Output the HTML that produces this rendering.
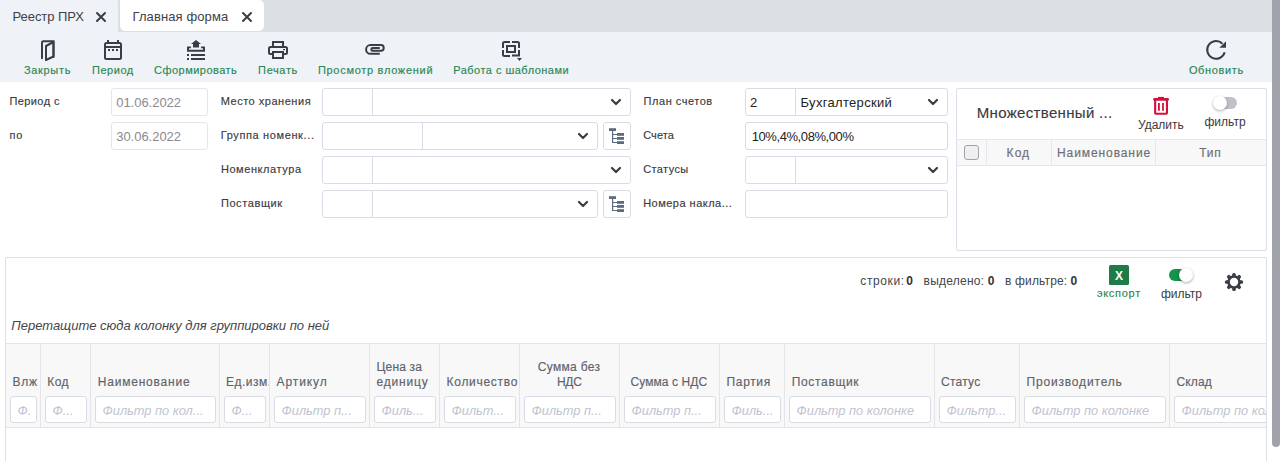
<!DOCTYPE html>
<html><head><meta charset="utf-8">
<style>
*{box-sizing:border-box;margin:0;padding:0}
html,body{width:1280px;height:461px;overflow:hidden;background:#fff;font-family:"Liberation Sans",sans-serif;position:relative}
.a{position:absolute}
.t{position:absolute;white-space:nowrap;line-height:1}
.box{position:absolute;border:1px solid #d9dbe5;border-radius:3px;background:#fff}
.dv{position:absolute;width:1px;background:#d9dbe5}
.clip{position:absolute;overflow:hidden;top:344px;height:83px}
</style></head><body>
<div class="a" style="left:0;top:0;width:1272px;height:32px;background:#dcdfe4"></div>
<div class="a" style="left:0;top:0;width:118px;height:32px;background:#eff2f7;border-top-right-radius:2px"></div>
<div class="a" style="left:120px;top:0;width:144px;height:31px;background:#fff;border-radius:0 5px 5px 5px"></div>
<div class="a" style="left:0;top:32px;width:1272px;height:50px;background:#eff2f7"></div>
<div class="a" style="left:1272px;top:0;width:8px;height:447px;background:#a0a3ab;border-radius:0 0 4px 4px"></div>
<div class="box" style="left:111px;top:88px;width:97px;height:28px;border-color:#e3e4ec"></div>
<div class="box" style="left:111px;top:122px;width:97px;height:28px;border-color:#e3e4ec"></div>
<div class="box" style="left:322px;top:88px;width:309px;height:28px"></div>
<div class="dv" style="left:372px;top:89px;height:26px"></div>
<div class="box" style="left:322px;top:122px;width:276px;height:28px"></div>
<div class="dv" style="left:422px;top:123px;height:26px"></div>
<div class="box" style="left:603px;top:122px;width:28px;height:28px"></div>
<div class="box" style="left:322px;top:156px;width:309px;height:28px"></div>
<div class="dv" style="left:372px;top:157px;height:26px"></div>
<div class="box" style="left:322px;top:190px;width:276px;height:28px"></div>
<div class="dv" style="left:372px;top:191px;height:26px"></div>
<div class="box" style="left:603px;top:190px;width:28px;height:28px"></div>
<div class="box" style="left:745px;top:88px;width:203px;height:28px"></div>
<div class="dv" style="left:795px;top:89px;height:26px"></div>
<div class="box" style="left:745px;top:122px;width:203px;height:28px"></div>
<div class="box" style="left:745px;top:156px;width:203px;height:28px"></div>
<div class="dv" style="left:795px;top:157px;height:26px"></div>
<div class="box" style="left:745px;top:190px;width:203px;height:28px"></div>
<div class="box" style="left:956px;top:88px;width:311px;height:163px;border-color:#dcdee8;border-radius:2px"></div>
<div class="a" style="left:957px;top:139px;width:309px;height:27px;background:#f8f8f9;border-top:1px solid #e6e7ec;border-bottom:1px solid #e6e7ec"></div>
<div class="dv" style="left:986px;top:140px;height:25px;background:#e6e7ec"></div>
<div class="dv" style="left:1051px;top:140px;height:25px;background:#e6e7ec"></div>
<div class="dv" style="left:1155px;top:140px;height:25px;background:#e6e7ec"></div>
<div class="a" style="left:964px;top:145px;width:15px;height:15px;border:1px solid #a2a4ab;border-radius:3px;background:#efeff1"></div>
<div class="a" style="left:1218px;top:97px;width:19px;height:11.5px;border-radius:6px;background:#bfc2c9"></div>
<div class="a" style="left:1213px;top:96px;width:14px;height:14px;border-radius:50%;background:#fff;box-shadow:0 1px 3px rgba(0,0,0,0.35)"></div>
<div class="box" style="left:5px;top:257px;width:1262px;height:220px;border-color:#dcdee8;border-radius:2px"></div>
<div class="a" style="left:1169px;top:269px;width:20px;height:11.5px;border-radius:6px;background:#16924a"></div>
<div class="a" style="left:1179px;top:268px;width:14px;height:14px;border-radius:50%;background:#fff;box-shadow:0 1px 3px rgba(0,0,0,0.35)"></div>
<div class="a" style="left:6px;top:343px;width:1260px;height:85px;background:#f8f8f9;border-top:1px solid #e3e4ea;border-bottom:1px solid #e3e4ea"></div>
<div class="dv" style="left:40px;top:344px;height:83px;background:#e3e4ea"></div>
<div class="dv" style="left:90px;top:344px;height:83px;background:#e3e4ea"></div>
<div class="dv" style="left:219px;top:344px;height:83px;background:#e3e4ea"></div>
<div class="dv" style="left:269px;top:344px;height:83px;background:#e3e4ea"></div>
<div class="dv" style="left:369px;top:344px;height:83px;background:#e3e4ea"></div>
<div class="dv" style="left:439px;top:344px;height:83px;background:#e3e4ea"></div>
<div class="dv" style="left:519px;top:344px;height:83px;background:#e3e4ea"></div>
<div class="dv" style="left:619px;top:344px;height:83px;background:#e3e4ea"></div>
<div class="dv" style="left:719px;top:344px;height:83px;background:#e3e4ea"></div>
<div class="dv" style="left:784px;top:344px;height:83px;background:#e3e4ea"></div>
<div class="dv" style="left:934px;top:344px;height:83px;background:#e3e4ea"></div>
<div class="dv" style="left:1019px;top:344px;height:83px;background:#e3e4ea"></div>
<div class="dv" style="left:1169px;top:344px;height:83px;background:#e3e4ea"></div>
<div class="t" style="left:12.5px;top:10px;font-size:13px;font-weight:400;color:#3f3f46;;letter-spacing:-0.056px;">Реестр ПРХ</div>
<div class="t" style="left:132.5px;top:10px;font-size:13px;font-weight:400;color:#3f3f46;;letter-spacing:0.104px;">Главная форма</div>
<div class="t" style="left:24px;top:65px;font-size:11px;font-weight:400;color:#2b8752;-webkit-text-stroke:0.15px #2b8752;;letter-spacing:0.667px;">Закрыть</div>
<div class="t" style="left:92px;top:65px;font-size:11px;font-weight:400;color:#2b8752;-webkit-text-stroke:0.15px #2b8752;;letter-spacing:0.54px;">Период</div>
<div class="t" style="left:154px;top:65px;font-size:11px;font-weight:400;color:#2b8752;-webkit-text-stroke:0.15px #2b8752;;letter-spacing:0.477px;">Сформировать</div>
<div class="t" style="left:258.1px;top:65px;font-size:11px;font-weight:400;color:#2b8752;-webkit-text-stroke:0.15px #2b8752;;letter-spacing:0.63px;">Печать</div>
<div class="t" style="left:317.9px;top:65px;font-size:11px;font-weight:400;color:#2b8752;-webkit-text-stroke:0.15px #2b8752;;letter-spacing:0.713px;">Просмотр вложений</div>
<div class="t" style="left:453.2px;top:65px;font-size:11px;font-weight:400;color:#2b8752;-webkit-text-stroke:0.15px #2b8752;;letter-spacing:0.482px;">Работа с шаблонами</div>
<div class="t" style="left:1188.9px;top:65px;font-size:11px;font-weight:400;color:#2b8752;-webkit-text-stroke:0.15px #2b8752;;letter-spacing:0.643px;">Обновить</div>
<div class="t" style="left:9.45px;top:96px;font-size:11px;font-weight:400;color:#3a3a40;-webkit-text-stroke:0.15px #3a3a40;;letter-spacing:0.407px;">Период с</div>
<div class="t" style="left:9.45px;top:130px;font-size:11px;font-weight:400;color:#3a3a40;-webkit-text-stroke:0.15px #3a3a40;;letter-spacing:0.85px;">по</div>
<div class="t" style="left:220.7px;top:96px;font-size:11px;font-weight:400;color:#3a3a40;-webkit-text-stroke:0.15px #3a3a40;;letter-spacing:0.523px;">Место хранения</div>
<div class="t" style="left:220.7px;top:130px;font-size:11px;font-weight:400;color:#3a3a40;-webkit-text-stroke:0.15px #3a3a40;;letter-spacing:0.627px;">Группа номенк...</div>
<div class="t" style="left:220.9px;top:164px;font-size:11px;font-weight:400;color:#3a3a40;-webkit-text-stroke:0.15px #3a3a40;;letter-spacing:0.573px;">Номенклатура</div>
<div class="t" style="left:220.9px;top:198px;font-size:11px;font-weight:400;color:#3a3a40;-webkit-text-stroke:0.15px #3a3a40;;letter-spacing:0.6px;">Поставщик</div>
<div class="t" style="left:643.6px;top:96px;font-size:11px;font-weight:400;color:#3a3a40;-webkit-text-stroke:0.15px #3a3a40;;letter-spacing:0.53px;">План счетов</div>
<div class="t" style="left:643.2px;top:130px;font-size:11px;font-weight:400;color:#3a3a40;-webkit-text-stroke:0.15px #3a3a40;;letter-spacing:0.1px;">Счета</div>
<div class="t" style="left:643.2px;top:164px;font-size:11px;font-weight:400;color:#3a3a40;-webkit-text-stroke:0.15px #3a3a40;;letter-spacing:0.4px;">Статусы</div>
<div class="t" style="left:643.2px;top:198px;font-size:11px;font-weight:400;color:#3a3a40;-webkit-text-stroke:0.15px #3a3a40;;letter-spacing:0.479px;">Номера накла...</div>
<div class="t" style="left:116.2px;top:96px;font-size:13px;font-weight:400;color:#8a8a8f;;letter-spacing:-0.022px;">01.06.2022</div>
<div class="t" style="left:116.2px;top:130px;font-size:13px;font-weight:400;color:#8a8a8f;;letter-spacing:-0.022px;">30.06.2022</div>
<div class="t" style="left:750px;top:96px;font-size:13px;font-weight:400;color:#222;;">2</div>
<div class="t" style="left:800.5px;top:96px;font-size:13px;font-weight:400;color:#222;;letter-spacing:0.317px;">Бухгалтерский</div>
<div class="t" style="left:751.7px;top:130px;font-size:13px;font-weight:400;color:#222;;letter-spacing:-0.415px;">10%,4%,08%,00%</div>
<div class="t" style="left:976.8px;top:105px;font-size:15px;font-weight:400;color:#3a3a40;-webkit-text-stroke:0.15px #3a3a40;;letter-spacing:0.325px;">Множественный ...</div>
<div class="t" style="left:1138px;top:119px;font-size:12px;font-weight:400;color:#3a3a40;;">Удалить</div>
<div class="t" style="left:1204.5px;top:116px;font-size:12px;font-weight:400;color:#3a3a40;;">фильтр</div>
<div class="t" style="left:1006.6px;top:147px;font-size:12px;font-weight:400;color:#6c6e75;-webkit-text-stroke:0.15px #6c6e75;;letter-spacing:1.05px;">Код</div>
<div class="t" style="left:1057px;top:147px;font-size:12px;font-weight:400;color:#6c6e75;-webkit-text-stroke:0.15px #6c6e75;;letter-spacing:0.909px;">Наименование</div>
<div class="t" style="left:1199.2px;top:147px;font-size:12px;font-weight:400;color:#6c6e75;-webkit-text-stroke:0.15px #6c6e75;;letter-spacing:0.75px;">Тип</div>
<div class="t" style="left:860.3px;top:275px;font-size:12px;font-weight:400;color:#44454b;;letter-spacing:0.6px;">строки:</div>
<div class="t" style="left:906.25px;top:275px;font-size:12px;font-weight:400;color:#333;font-weight:700;">0</div>
<div class="t" style="left:923.6px;top:275px;font-size:12px;font-weight:400;color:#44454b;;letter-spacing:0.225px;">выделено:</div>
<div class="t" style="left:987.8px;top:275px;font-size:12px;font-weight:400;color:#333;font-weight:700;">0</div>
<div class="t" style="left:1005px;top:275px;font-size:12px;font-weight:400;color:#44454b;;letter-spacing:0.156px;">в фильтре:</div>
<div class="t" style="left:1070.6px;top:275px;font-size:12px;font-weight:400;color:#333;font-weight:700;">0</div>
<div class="t" style="left:1096.9px;top:288px;font-size:11px;font-weight:400;color:#2b8752;-webkit-text-stroke:0.15px #2b8752;;letter-spacing:0.717px;">экспорт</div>
<div class="t" style="left:1161px;top:288px;font-size:12px;font-weight:400;color:#3a3a40;;letter-spacing:-0.04px;">фильтр</div>
<div class="t" style="left:11.3px;top:319.2px;font-size:13px;font-weight:400;color:#44454b;font-style:italic;letter-spacing:-0.009px;">Перетащите сюда колонку для группировки по ней</div>
<div class="clip" style="left:6px;width:34px">
<div class="box" style="left:4px;top:52px;width:27px;height:27px"></div>
<div class="t" style="left:6.4px;top:32px;font-size:12px;font-weight:400;color:#606269;-webkit-text-stroke:0.15px #606269;;letter-spacing:0.75px;">Влж</div>
<div class="t" style="left:11.6px;top:61px;font-size:12.8px;font-weight:400;color:#bfc3cf;font-style:italic;">Ф.</div>
</div>
<div class="clip" style="left:41px;width:49px">
<div class="box" style="left:4px;top:52px;width:42px;height:27px"></div>
<div class="t" style="left:6.3px;top:32px;font-size:12px;font-weight:400;color:#606269;-webkit-text-stroke:0.15px #606269;;letter-spacing:0.35px;">Код</div>
<div class="t" style="left:11.6px;top:61px;font-size:12.8px;font-weight:400;color:#bfc3cf;font-style:italic;">Ф...</div>
</div>
<div class="clip" style="left:91px;width:128px">
<div class="box" style="left:4px;top:52px;width:121px;height:27px"></div>
<div class="t" style="left:6.7px;top:32px;font-size:12px;font-weight:400;color:#606269;-webkit-text-stroke:0.15px #606269;;letter-spacing:0.8px;">Наименование</div>
<div class="t" style="left:11.6px;top:61px;font-size:12.8px;font-weight:400;color:#bfc3cf;font-style:italic;">Фильтр по кол...</div>
</div>
<div class="clip" style="left:220px;width:49px">
<div class="box" style="left:4px;top:52px;width:42px;height:27px"></div>
<div class="t" style="left:6px;top:32px;font-size:12px;font-weight:400;color:#606269;-webkit-text-stroke:0.15px #606269;;letter-spacing:0.5px;">Ед.изм.</div>
<div class="t" style="left:11.6px;top:61px;font-size:12.8px;font-weight:400;color:#bfc3cf;font-style:italic;">Ф...</div>
</div>
<div class="clip" style="left:270px;width:99px">
<div class="box" style="left:4px;top:52px;width:92px;height:27px"></div>
<div class="t" style="left:6.6px;top:32px;font-size:12px;font-weight:400;color:#606269;-webkit-text-stroke:0.15px #606269;;letter-spacing:0.9px;">Артикул</div>
<div class="t" style="left:11.6px;top:61px;font-size:12.8px;font-weight:400;color:#bfc3cf;font-style:italic;">Фильтр п...</div>
</div>
<div class="clip" style="left:370px;width:69px">
<div class="box" style="left:4px;top:52px;width:62px;height:27px"></div>
<div class="t" style="left:6.6px;top:17px;font-size:12px;font-weight:400;color:#606269;-webkit-text-stroke:0.15px #606269;;letter-spacing:0.15px;">Цена за</div>
<div class="t" style="left:6.6px;top:32px;font-size:12px;font-weight:400;color:#606269;-webkit-text-stroke:0.15px #606269;;letter-spacing:0.8px;">единицу</div>
<div class="t" style="left:11.6px;top:61px;font-size:12.8px;font-weight:400;color:#bfc3cf;font-style:italic;">Филь...</div>
</div>
<div class="clip" style="left:440px;width:79px">
<div class="box" style="left:4px;top:52px;width:72px;height:27px"></div>
<div class="t" style="left:6.6px;top:32px;font-size:12px;font-weight:400;color:#606269;-webkit-text-stroke:0.15px #606269;;letter-spacing:0.7px;">Количество</div>
<div class="t" style="left:11.6px;top:61px;font-size:12.8px;font-weight:400;color:#bfc3cf;font-style:italic;">Фильт...</div>
</div>
<div class="clip" style="left:520px;width:99px">
<div class="box" style="left:4px;top:52px;width:92px;height:27px"></div>
<div class="t" style="left:17.8px;top:17px;font-size:12px;font-weight:400;color:#606269;-webkit-text-stroke:0.15px #606269;;letter-spacing:0.312px;">Сумма без</div>
<div class="t" style="left:37px;top:32px;font-size:12px;font-weight:400;color:#606269;-webkit-text-stroke:0.15px #606269;;letter-spacing:-0.3px;">НДС</div>
<div class="t" style="left:11.6px;top:61px;font-size:12.8px;font-weight:400;color:#bfc3cf;font-style:italic;">Фильтр п...</div>
</div>
<div class="clip" style="left:620px;width:99px">
<div class="box" style="left:4px;top:52px;width:92px;height:27px"></div>
<div class="t" style="left:10.5px;top:32px;font-size:12px;font-weight:400;color:#606269;-webkit-text-stroke:0.15px #606269;;letter-spacing:0.08px;">Сумма с НДС</div>
<div class="t" style="left:11.6px;top:61px;font-size:12.8px;font-weight:400;color:#bfc3cf;font-style:italic;">Фильтр п...</div>
</div>
<div class="clip" style="left:720px;width:64px">
<div class="box" style="left:4px;top:52px;width:57px;height:27px"></div>
<div class="t" style="left:6.6px;top:32px;font-size:12px;font-weight:400;color:#606269;-webkit-text-stroke:0.15px #606269;;letter-spacing:0.64px;">Партия</div>
<div class="t" style="left:11.6px;top:61px;font-size:12.8px;font-weight:400;color:#bfc3cf;font-style:italic;">Филь...</div>
</div>
<div class="clip" style="left:785px;width:149px">
<div class="box" style="left:4px;top:52px;width:142px;height:27px"></div>
<div class="t" style="left:6.7px;top:32px;font-size:12px;font-weight:400;color:#606269;-webkit-text-stroke:0.15px #606269;;letter-spacing:0.675px;">Поставщик</div>
<div class="t" style="left:11.6px;top:61px;font-size:12.8px;font-weight:400;color:#bfc3cf;font-style:italic;">Фильтр по колонке</div>
</div>
<div class="clip" style="left:935px;width:84px">
<div class="box" style="left:4px;top:52px;width:77px;height:27px"></div>
<div class="t" style="left:6.1px;top:32px;font-size:12px;font-weight:400;color:#606269;-webkit-text-stroke:0.15px #606269;;letter-spacing:0.22px;">Статус</div>
<div class="t" style="left:11.6px;top:61px;font-size:12.8px;font-weight:400;color:#bfc3cf;font-style:italic;">Фильтр...</div>
</div>
<div class="clip" style="left:1020px;width:149px">
<div class="box" style="left:4px;top:52px;width:142px;height:27px"></div>
<div class="t" style="left:6.5px;top:32px;font-size:12px;font-weight:400;color:#606269;-webkit-text-stroke:0.15px #606269;;letter-spacing:0.825px;">Производитель</div>
<div class="t" style="left:11.6px;top:61px;font-size:12.8px;font-weight:400;color:#bfc3cf;font-style:italic;">Фильтр по колонке</div>
</div>
<div class="clip" style="left:1170px;width:96px">
<div class="box" style="left:4px;top:52px;width:223px;height:27px"></div>
<div class="t" style="left:6.6px;top:32px;font-size:12px;font-weight:400;color:#606269;-webkit-text-stroke:0.15px #606269;;letter-spacing:0.1px;">Склад</div>
<div class="t" style="left:11.6px;top:61px;font-size:12.8px;font-weight:400;color:#bfc3cf;font-style:italic;">Фильтр по колонке</div>
</div>
<svg class="a" style="left:0;top:0" width="1280" height="461" viewBox="0 0 1280 461">
<g stroke="#3a3d46" stroke-width="2" fill="none" stroke-linecap="round">
<path d="M97 13 L105 21 M105 13 L97 21"/>
<path d="M243 13 L251 21 M251 13 L243 21"/>
</g>
<g stroke="#3a3d46" stroke-width="2" fill="none">
<!-- door -->
<path d="M42 58.3 V42.5 Q42 41.2 43.3 41.2 H53.5 V57" stroke-linecap="round"/>
<path d="M46 60 V46 L53.5 42 V56.5 Z" stroke-linejoin="round"/>
<!-- calendar -->
<rect x="105" y="43" width="16" height="16" rx="1.5"/>
<path d="M105 47 H121"/>
<!-- printer -->
<rect x="273" y="42" width="10" height="5"/>
<rect x="269" y="47" width="18" height="7" rx="1.5"/>
<rect x="273" y="52" width="10" height="6" fill="#eff2f7"/>
<!-- paperclip -->
<path d="M379.8 53.8 H370.45 A4.35 4.35 0 0 1 370.45 45.1 H381.07 A2.83 2.83 0 0 1 381.07 50.75 H372.65 A1.35 1.35 0 0 1 372.65 48.05 H379.8"/>
<!-- template -->
<path d="M503 48 V43.5 Q503 42 504.5 42 H510 M512 42 H517.5 Q519 42 519 43.5 V48 M519 50 V55.6 H512 M510 56 H504.5 Q503 56 503 54.5 V50"/>
<rect x="507" y="46" width="8" height="6"/>
<!-- refresh -->
<path d="M1222.5 43.72 A8.9 8.9 0 1 0 1224.68 52.28"/>
</g>
<g fill="#3a3d46">
<rect x="107" y="40" width="2" height="3"/>
<rect x="117" y="40" width="2" height="3"/>
<rect x="108" y="49" width="2" height="2"/>
<rect x="112" y="49" width="2" height="2"/>
<rect x="116" y="49" width="2" height="2"/>
<!-- form icon -->
<path d="M196 40 L201 44 H199 V47.5 H193 V44 H191 Z"/>
<path d="M187 46.4 H191 V48.3 H189 V49.7 H203 V48.3 H201 V46.4 H205 V51.7 H187 Z"/>
<rect x="187" y="54" width="2" height="2"/>
<rect x="191" y="54" width="14" height="2"/>
<rect x="187" y="58" width="2" height="2"/>
<rect x="191" y="58" width="14" height="2"/>
<!-- template triangle -->
<path d="M517 58 H522 L519.5 61 Z"/>
<!-- refresh arrow -->
<path d="M1226 41.2 V47.8 H1219.4 Z"/>
<!-- printer dot -->
<rect x="283" y="49" width="2" height="1.2" fill="#3a3d46"/>
</g>
<!-- chevrons -->
<g stroke="#3a3d46" stroke-width="2.2" fill="none" stroke-linecap="round" stroke-linejoin="round">
<path d="M612 100 L616 104 L620 100"/>
<path d="M579 134 L583 138 L587 134"/>
<path d="M612 168 L616 172 L620 168"/>
<path d="M579 202 L583 206 L587 202"/>
<path d="M929 100 L933 104 L937 100"/>
<path d="M929 168 L933 172 L937 168"/>
</g>
<!-- tree icons -->
<g fill="#5c6b7e">
<rect x="609" y="128.2" width="7" height="2.8"/>
<rect x="612" y="131" width="1.2" height="12"/>
<rect x="612" y="134" width="5" height="1"/>
<rect x="612" y="138" width="5" height="1"/>
<rect x="612" y="142" width="5" height="1"/>
<rect x="617" y="133" width="7" height="2.8"/>
<rect x="617" y="137" width="7" height="2.8"/>
<rect x="617" y="141.2" width="7" height="2.8"/>
</g>
<g fill="#5c6b7e" transform="translate(0 68)">
<rect x="609" y="128.2" width="7" height="2.8"/>
<rect x="612" y="131" width="1.2" height="12"/>
<rect x="612" y="134" width="5" height="1"/>
<rect x="612" y="138" width="5" height="1"/>
<rect x="612" y="142" width="5" height="1"/>
<rect x="617" y="133" width="7" height="2.8"/>
<rect x="617" y="137" width="7" height="2.8"/>
<rect x="617" y="141.2" width="7" height="2.8"/>
</g>
<!-- trash -->
<g fill="#d3103c">
<rect x="1153.2" y="98" width="15.8" height="2.6" rx="1.2"/>
<rect x="1158" y="96.9" width="6" height="2"/>
<path d="M1154.1 100 H1168 V113 Q1168 114.8 1166.2 114.8 H1155.9 Q1154.1 114.8 1154.1 113 Z M1156.2 100.5 V112.7 H1165.9 V100.5 Z" fill-rule="evenodd"/>
<rect x="1158" y="103" width="1.8" height="7.8"/>
<rect x="1162.1" y="103" width="1.8" height="7.8"/>
</g>
<!-- excel -->
<rect x="1109" y="265" width="20" height="20" rx="1.5" fill="#1f7b45"/>

<!-- gear -->
<g fill="#3a3d46" transform="translate(1234 282)">
<circle r="6.7"/>
<g id="teeth">
<rect x="-1.8" y="-9.1" width="3.6" height="5" rx="1.6"/>
<rect x="-1.8" y="4.1" width="3.6" height="5" rx="1.6"/>
<rect x="-9.1" y="-1.8" width="5" height="3.6" rx="1.6"/>
<rect x="4.1" y="-1.8" width="5" height="3.6" rx="1.6"/>
</g>
<g transform="rotate(45)">
<rect x="-1.8" y="-9.1" width="3.6" height="5" rx="1.6"/>
<rect x="-1.8" y="4.1" width="3.6" height="5" rx="1.6"/>
<rect x="-9.1" y="-1.8" width="5" height="3.6" rx="1.6"/>
<rect x="4.1" y="-1.8" width="5" height="3.6" rx="1.6"/>
</g>
<circle r="4.2" fill="#fff"/>
</g>
</svg>

<div class="t" style="left:1115px;top:269.5px;font-size:12px;font-weight:700;color:#fff">X</div>
</body></html>
